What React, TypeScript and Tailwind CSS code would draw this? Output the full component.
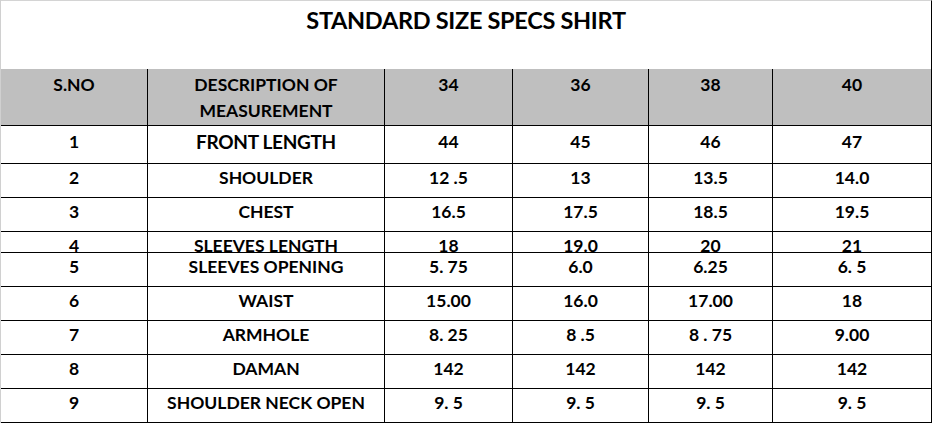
import React from "react";

const widths = ["w-[147px]", "w-[237px]", "w-[128px]", "w-[136px]", "w-[124px]", "w-[159px]"];

type Row = { cells: string[]; h: string; clip?: boolean; big?: boolean };

const rows: Row[] = [
  { cells: ["1", "FRONT LENGTH", "44", "45", "46", "47"], h: "h-[38px]", big: true },
  { cells: ["2", "SHOULDER", "12 .5", "13", "13.5", "14.0"], h: "h-[34px]" },
  { cells: ["3", "CHEST", "16.5", "17.5", "18.5", "19.5"], h: "h-[34px]" },
  { cells: ["4", "SLEEVES LENGTH", "18", "19.0", "20", "21"], h: "h-[21px]", clip: true },
  { cells: ["5", "SLEEVES OPENING", "5. 75", "6.0", "6.25", "6. 5"], h: "h-[34px]" },
  { cells: ["6", "WAIST", "15.00", "16.0", "17.00", "18"], h: "h-[34px]" },
  { cells: ["7", "ARMHOLE", "8. 25", "8 .5", "8 . 75", "9.00"], h: "h-[34px]" },
  { cells: ["8", "DAMAN", "142", "142", "142", "142"], h: "h-[34px]" },
  { cells: ["9", "SHOULDER NECK OPEN", "9. 5", "9. 5", "9. 5", "9. 5"], h: "h-[34px]" },
];

export default function App() {
  return (
    <div
      className="w-[932px] h-[423px] bg-white text-black border-l border-l-[#d0d0d0] flex flex-col overflow-hidden"
      style={{ fontFamily: "Lato, 'Open Sans', sans-serif" }}
    >
      <div className="h-[69px] shrink-0 border-t border-t-[#d4d4d4] border-r border-r-black flex justify-center">
        <h1 className="mt-[4px] text-[23.5px] font-bold leading-[30px] tracking-[-0.3px]">
          STANDARD SIZE SPECS SHIRT
        </h1>
      </div>
      <div className="flex h-[57px] shrink-0 bg-[#bfbfbf] border-b border-black">
        {["S.NO", "DESCRIPTION OF MEASUREMENT", "34", "36", "38", "40"].map((t, i) => (
          <div
            key={i}
            className={`${widths[i]} shrink-0 border-r border-black flex justify-center pt-[3px] text-[17.5px] font-bold leading-[26px] text-center ${i === 1 ? "px-[38px]" : ""}`}
          >
            <span>{t}</span>
          </div>
        ))}
      </div>
      {rows.map((r, ri) => (
        <div key={ri} className={`flex ${r.h} shrink-0 border-b border-black overflow-hidden`}>
          {r.cells.map((c, i) => (
            <div
              key={i}
              className={`${widths[i]} shrink-0 border-r border-black flex justify-center items-start overflow-hidden`}
            >
              <div
                className={`flex items-center justify-center pb-[4px] ${r.big ? "h-[37px]" : "h-[33px]"} shrink-0 font-bold whitespace-pre ${
                  r.big && i === 1 ? "text-[19px] tracking-[-0.3px]" : "text-[17.5px]"
                }`}
              >
                {c}
              </div>
            </div>
          ))}
        </div>
      ))}
    </div>
  );
}
